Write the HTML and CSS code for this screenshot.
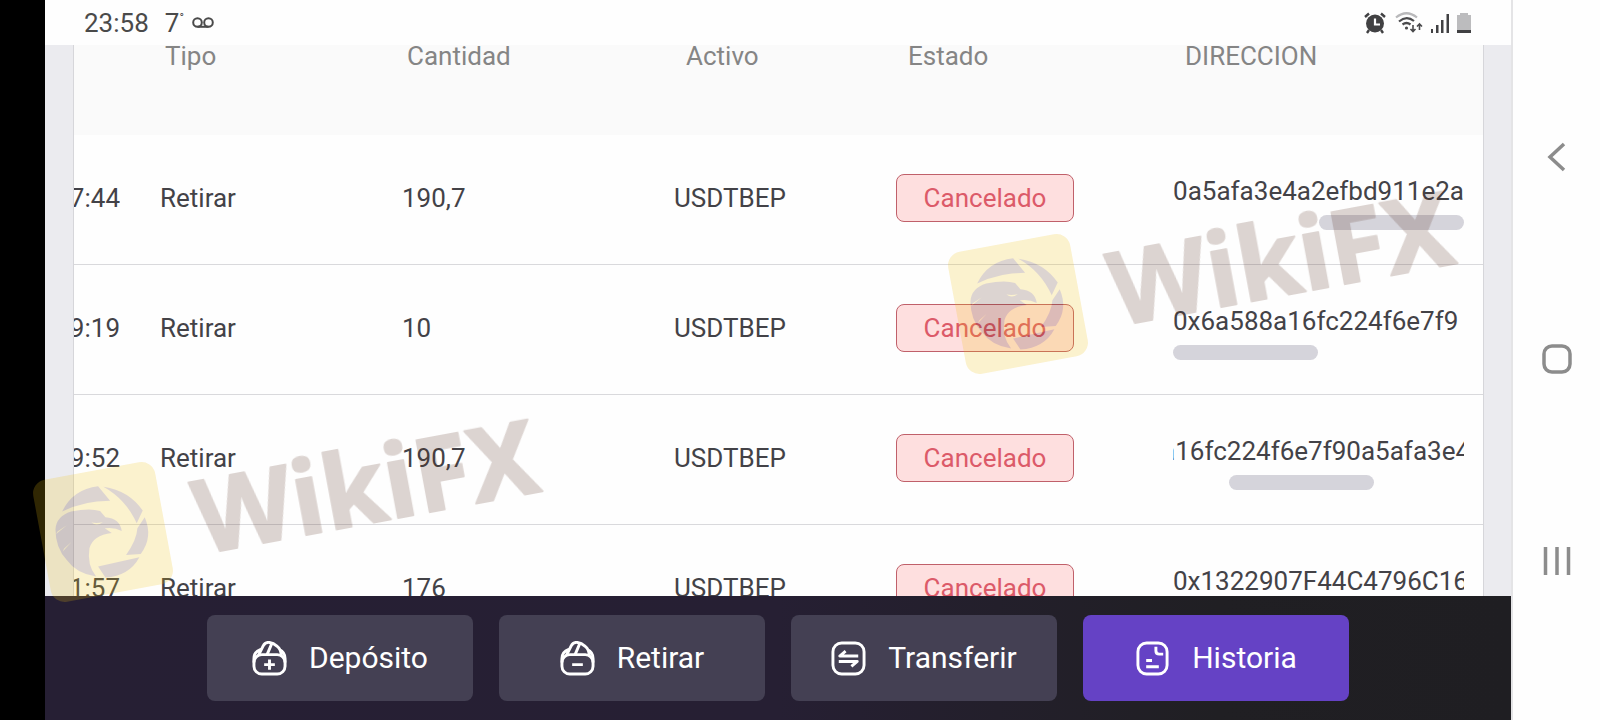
FILE: index.html
```html
<!DOCTYPE html>
<html lang="es">
<head>
<meta charset="utf-8">
<meta name="viewport" content="width=device-width, initial-scale=1">
<title>Historia</title>
<link rel="stylesheet" href="styles.css">
</head>
<body>
<div class="device">
  <div class="screen">
    <header class="status">
      <div class="status-side">
        <span>23:58</span>
        <span class="temp">7<sup>°</sup></span>
        <svg width="22" height="12" viewBox="0 0 22 12" fill="none" stroke="#4a4a4a" stroke-width="2" aria-hidden="true"><circle cx="5.5" cy="5.5" r="4.3"/><circle cx="16.5" cy="5.5" r="4.3"/><path d="M5.500 9.800H16.500"/></svg>
      </div>
      <div class="status-side status-icons">
        <svg width="24" height="22" viewBox="0 0 24 22" aria-hidden="true"><circle cx="12" cy="11.500" r="9" fill="#414143"/><path d="M2 5 6 1.500M22 5 18 1.500M6 18l-2 3M18 18l2 3" stroke="#414143" stroke-width="2.400"/><path d="M12 6.500V12.500H17" fill="none" stroke="#fff" stroke-width="2.200"/></svg>
        <svg width="28" height="22" viewBox="0 0 28 22" fill="none" stroke="#4a4a4c" stroke-width="2.200" aria-hidden="true"><path d="M1 5.500Q11.500-3 22 5.500" stroke="#b9b9bb"/><path d="M4 9.500Q11.500 3 19 9"/><path d="M7.500 12.500Q11.500 9.500 15.500 12.500"/><circle cx="11.500" cy="16" r="1.600" fill="#4a4a4c" stroke="none"/><path d="M18 13v6M15.500 17l2.500 2.500L20.500 17M24.500 18v-6M22 14.500l2.500-2.500 2.500 2.500" stroke-width="1.600"/></svg>
        <svg width="18" height="22" viewBox="0 0 18 22" fill="#414143" aria-hidden="true"><path d="M0 17h2v4H0zM5 13h2.500v8H5zM10 8h2.500v13H10zM15.500 2H18v19h-2.500z"/></svg>
        <svg width="14" height="22" viewBox="0 0 14 22" aria-hidden="true"><path d="M3 1h8v2h3v15H0V3h3z" fill="#bcbcbe"/><path d="M0 18h14v3H0z" fill="#414143"/></svg>
      </div>
    </header>

    <main class="content">
      <div class="card">
        <table class="history">
          <colgroup><col class="c-time"><col class="c-type"><col class="c-amount"><col class="c-asset"><col class="c-state"><col></colgroup>
          <thead>
            <tr><th></th><th>Tipo</th><th>Cantidad</th><th class="th-in">Activo</th><th class="th-in">Estado</th><th class="th-in">DIRECCION</th></tr>
          </thead>
          <tbody>
            <tr>
              <td><div class="time">7:44</div></td><td>Retirar</td><td>190,7</td><td>USDTBEP</td>
              <td><span class="badge">Cancelado</span></td>
              <td><div class="address at-end"><div class="address-text">0x6a588a16fc224f6e7f90a5afa3e4a2efbd911e2a</div><div class="thumb"></div></div></td>
            </tr>
            <tr>
              <td><div class="time">9:19</div></td><td>Retirar</td><td>10</td><td>USDTBEP</td>
              <td><span class="badge">Cancelado</span></td>
              <td><div class="address"><div class="address-text">0x6a588a16fc224f6e7f9</div><div class="thumb"></div></div></td>
            </tr>
            <tr>
              <td><div class="time">9:52</div></td><td>Retirar</td><td>190,7</td><td>USDTBEP</td>
              <td><span class="badge">Cancelado</span></td>
              <td><div class="address at-middle"><div class="address-text">0x6a588a16fc224f6e7f90a5afa3e4a2efbd911e2a</div><div class="thumb"></div></div></td>
            </tr>
            <tr>
              <td><div class="time">1:57</div></td><td>Retirar</td><td>176</td><td>USDTBEP</td>
              <td><span class="badge">Cancelado</span></td>
              <td><div class="address"><div class="address-text">0x1322907F44C4796C16</div><div class="thumb"></div></div></td>
            </tr>
          </tbody>
        </table>
      </div>
    </main>

    <nav class="actions" aria-label="Acciones">
      <button class="action" type="button">
        <svg class="icon" viewBox="0 0 36 36" aria-hidden="true"><rect x="2" y="14" width="32" height="20" rx="8"/><path d="M2 22V18Q2 11 9 8.500M6.500 15 11.500 5Q13.500 1 18 1.500Q22 2 26 5.500Q30 8.500 30 15M15.500 14 20 3.500M28 8.500Q34 11.500 34 18V22M18 19v10.500M12.500 24.300h11"/></svg>
        Depósito
      </button>
      <button class="action" type="button">
        <svg class="icon" viewBox="0 0 36 36" aria-hidden="true"><rect x="2" y="14" width="32" height="20" rx="8"/><path d="M2 22V18Q2 11 9 8.500M6.500 15 11.500 5Q13.500 1 18 1.500Q22 2 26 5.500Q30 8.500 30 15M15.500 14 20 3.500M28 8.500Q34 11.500 34 18V22M12.500 24.300h11"/></svg>
        Retirar
      </button>
      <button class="action" type="button">
        <svg class="icon" viewBox="0 0 36 36" aria-hidden="true"><rect x="2" y="2" width="32" height="32" rx="9"/><path d="M28 15.500H9L15 10.500M8 21H27L21 26"/></svg>
        Transferir
      </button>
      <button class="action active" type="button">
        <svg class="icon" viewBox="0 0 36 36" aria-hidden="true"><rect x="3" y="2" width="30" height="32" rx="9"/><path d="M21.500 6V10Q21.500 13.500 25 13.500H29M11.500 20H17.500M11.500 26.500H24.500"/></svg>
        Historia
      </button>
    </nav>
  </div>

  <nav class="system" aria-label="Sistema">
    <button type="button" aria-label="Atrás"><svg width="30" height="30" viewBox="0 0 30 30"><path d="M22 2 8 15 22 28"/></svg></button>
    <button type="button" aria-label="Inicio"><svg width="30" height="30" viewBox="0 0 30 30"><rect x="2" y="2" width="26" height="26" rx="8"/></svg></button>
    <button type="button" aria-label="Recientes"><svg width="30" height="30" viewBox="0 0 30 30"><path d="M3.500 1V29M15 1V29M26.500 1V29"/></svg></button>
  </nav>

  <svg class="watermark mark-one" width="2" height="2" aria-hidden="true">
    <defs>
      <g id="mark">
        <rect class="mark-tile" x="-62" y="-62" width="124" height="124" rx="14" transform="rotate(-10.500)"/>
        <g class="mark-ink">
          <path transform="translate(-73.500 -72) scale(.333)" fill-rule="evenodd" d="M98 155Q130 88 206 79L242 122Q160 122 98 155ZM222 80Q300 92 340 152L322 190Q290 118 222 80ZM346 172Q372 232 334 282L290 285Q322 240 324 205ZM206 320 330 292Q300 348 228 353ZM78 208Q80 170 125 155Q180 143 212 153L228 172Q272 176 277 213Q255 201 226 205L247 219Q190 226 180 265Q172 315 200 350Q140 340 112 300Q78 265 78 208ZM186 188Q202 200 220 187Q203 191 186 188ZM80 222 112 196 84 215ZM100 275 126 246 104 266Z"/>
          <text class="mark-text" x="93" y="40" transform="rotate(-10.500)">WikiFX</text>
        </g>
      </g>
    </defs>
    <use href="#mark"/>
  </svg>
  <svg class="watermark mark-two" width="2" height="2" aria-hidden="true"><use href="#mark"/></svg>
</div>
</body>
</html>
```

FILE: styles.css
```css
* {
  box-sizing: border-box;
}

body {
  margin: 0;
  font-family: Roboto, "Liberation Sans", sans-serif;
  font-size: 26px;
  line-height: 30px;
  color: #434247;
}

button {
  border: 0;
  font: inherit;
  cursor: pointer;
}

.device {
  position: relative;
  display: flex;
  height: 100vh;
  padding-left: 45px;
  overflow: hidden;
  background: #000;
}

.screen {
  display: flex;
  flex: 1;
  flex-direction: column;
  min-width: 0;
  background: #ebebef;
}

/* Status bar */
.status {
  display: flex;
  flex: none;
  align-items: center;
  justify-content: space-between;
  height: 45px;
  padding: 0 40px 0 39px;
  background: #fefefe;
  color: #4a4a4a;
}

.status-side {
  display: flex;
  align-items: center;
  gap: 8px;
}

.temp {
  margin-left: 8px;
}

.temp sup {
  font-size: 12px;
  line-height: 0;
}

/* History table */
.content {
  flex: 1;
  min-height: 0;
  padding: 0 27px 0 28px;
  overflow: hidden;
}

.card {
  overflow: hidden;
  border: solid #d6d6da;
  border-width: 0 1px;
  background: #fefefe;
}

.history {
  width: 100%;
  table-layout: fixed;
  border-collapse: separate;
  border-spacing: 0;
}

.c-time {
  width: 86px;
}

.c-type {
  width: 242px;
}

.c-amount {
  width: 272px;
}

.c-asset {
  width: 222px;
}

.c-state {
  width: 277px;
}

.history th {
  height: 90px;
  padding: 0 0 0 5px;
  background: #fafafa;
  color: #858585;
  font-weight: 400;
  line-height: 22px;
  text-align: left;
  vertical-align: top;
}

.history .th-in {
  padding-left: 12px;
}

.history td {
  height: 130px;
  padding: 0 0 3px;
  border-bottom: 1px solid #d9d9dc;
}

.time {
  display: flex;
  justify-content: flex-end;
  width: 46px;
  overflow: hidden;
}

.badge {
  display: block;
  width: 178px;
  padding: 8px 0;
  border: 1px solid #c0606a;
  border-radius: 8px;
  background: #fedfdf;
  color: #dc5a69;
  text-align: center;
}

.address {
  display: flex;
  flex-direction: column;
  align-items: flex-start;
  gap: 9px;
  margin-right: 19px;
  padding-top: 9px;
  overflow: hidden;
}

.address-text {
  white-space: nowrap;
}

.thumb {
  width: 145px;
  height: 15px;
  border-radius: 8px;
  background: #d5d4db;
}

.at-end {
  align-items: flex-end;
}

.at-middle .address-text {
  margin-left: -112px;
}

.at-middle .thumb {
  margin-left: 56px;
}

/* Bottom actions */
.actions {
  display: flex;
  flex: none;
  justify-content: center;
  gap: 26px;
  padding: 19px 24px;
  background: linear-gradient(90deg, #261f34 0%, #261f33 50%, #201f23 80%, #1f1e22 100%);
}

.action {
  display: flex;
  align-items: center;
  justify-content: center;
  gap: 22px;
  width: 266px;
  height: 86px;
  padding: 0;
  border-radius: 8px;
  background: #444053;
  color: #fff;
  font-size: 30px;
}

.active {
  background: #6542c5;
}

.icon {
  width: 35px;
  height: 35px;
  fill: none;
  stroke: #fff;
  stroke-width: 3;
  stroke-linejoin: round;
}

/* System navigation */
.system {
  display: flex;
  flex: none;
  flex-direction: column;
  align-items: center;
  justify-content: space-between;
  width: 89px;
  padding: 142px 0 144px;
  border-left: 2px solid #e4e4e6;
  background: #fefefe;
}

.system button {
  display: flex;
  padding: 0;
  background: none;
}

.system svg {
  fill: none;
  stroke: #8c8c8c;
  stroke-width: 3.5;
}

/* Watermarks */
.watermark {
  position: absolute;
  overflow: visible;
  opacity: 0.2;
  pointer-events: none;
}

.mark-one {
  left: 103px;
  top: 532px;
}

.mark-two {
  left: 1018px;
  top: 304px;
}

.mark-tile {
  fill: #f0c010;
}

.mark-ink {
  fill: #583020;
}

.mark-text {
  font-family: "Noto Sans", sans-serif;
  font-size: 102px;
  font-weight: 700;
  stroke: #583020;
  stroke-width: 2;
  stroke-linejoin: round;
}
```
